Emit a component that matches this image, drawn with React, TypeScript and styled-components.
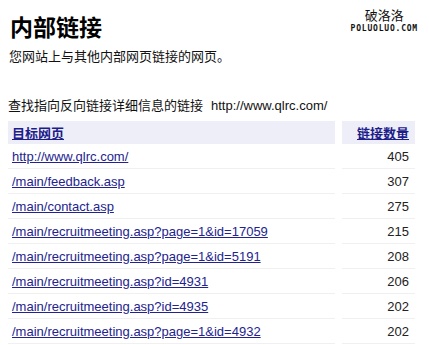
import styled, { createGlobalStyle } from "styled-components";

const GlobalStyle = createGlobalStyle`
  html, body {
    margin: 0;
    padding: 0;
    background: #fff;
  }
  body {
    font-family: "Liberation Sans", "Noto Sans CJK SC", sans-serif;
    color: #111;
  }
`;

const Page = styled.div`
  position: relative;
  width: 429px;
  height: 345px;
  overflow: hidden;
  padding: 0 8px;
  box-sizing: border-box;
`;

const Title = styled.h1`
  margin: 14px 0 0 2px;
  font-family: "Noto Sans CJK SC", sans-serif;
  font-size: 23px;
  line-height: 24px;
  font-weight: 700;
  color: #000;
`;

const Intro = styled.p`
  margin: 10px 0 0 1px;
  font-family: "Noto Sans CJK SC", sans-serif;
  font-size: 13px;
  line-height: 16px;
  color: #111;
`;

const SearchLine = styled.p`
  margin: 33px 0 0 0;
  font-size: 13px;
  line-height: 16px;
  font-family: "Noto Sans CJK SC", sans-serif;
  color: #111;

  span {
    margin-left: 8px;
    font-family: "Liberation Sans", sans-serif;
    font-size: 13px;
  }
`;

const Watermark = styled.div`
  position: absolute;
  top: 6px;
  right: 11px;
  display: flex;
  flex-direction: column;
  align-items: center;
  color: #111;
`;

const MarkCn = styled.div`
  font-family: "Noto Sans CJK SC", sans-serif;
  font-size: 13px;
  line-height: 18px;
`;

const MarkEn = styled.div`
  font-family: "DejaVu Sans Mono", monospace;
  font-weight: 700;
  font-size: 8px;
  line-height: 9px;
  letter-spacing: 0.8px;
`;

const Table = styled.div`
  margin-top: 7px;
  display: grid;
  grid-template-columns: 327px 73px;
  column-gap: 7px;
`;

const HeadCell = styled.div<{ $right?: boolean }>`
  height: 23px;
  background: #eeeef8;
  display: flex;
  align-items: center;
  justify-content: ${(p) => (p.$right ? "flex-end" : "flex-start")};
  padding: ${(p) => (p.$right ? "0 6px 0 0" : "0 0 0 4px")};

  a {
    font-family: "Noto Sans CJK SC", sans-serif;
    font-weight: 700;
    font-size: 13px;
    color: #1c1c8a;
    text-decoration: underline;
  }
`;

const Cell = styled.div<{ $right?: boolean }>`
  height: 25px;
  box-sizing: border-box;
  border-bottom: 1px solid #f0f0f0;
  display: flex;
  align-items: center;
  justify-content: ${(p) => (p.$right ? "flex-end" : "flex-start")};
  padding: ${(p) => (p.$right ? "1px 6px 0 0" : "1px 0 0 4px")};
  font-size: 13px;
  color: #222;
`;

const PageLink = styled.a`
  color: #23238f;
  text-decoration: underline;
  font-size: 13px;
`;

const rows = [
  { url: "http://www.qlrc.com/", count: 405 },
  { url: "/main/feedback.asp", count: 307 },
  { url: "/main/contact.asp", count: 275 },
  { url: "/main/recruitmeeting.asp?page=1&id=17059", count: 215 },
  { url: "/main/recruitmeeting.asp?page=1&id=5191", count: 208 },
  { url: "/main/recruitmeeting.asp?id=4931", count: 206 },
  { url: "/main/recruitmeeting.asp?id=4935", count: 202 },
  { url: "/main/recruitmeeting.asp?page=1&id=4932", count: 202 },
];

const App = () => {
  return (
    <Page>
      <GlobalStyle />
      <Watermark>
        <MarkCn>破洛洛</MarkCn>
        <MarkEn>POLUOLUO.COM</MarkEn>
      </Watermark>
      <Title>内部链接</Title>
      <Intro>您网站上与其他内部网页链接的网页。</Intro>
      <SearchLine>
        查找指向反向链接详细信息的链接<span>http://www.qlrc.com/</span>
      </SearchLine>
      <Table>
        <HeadCell>
          <a href="#">目标网页</a>
        </HeadCell>
        <HeadCell $right>
          <a href="#">链接数量</a>
        </HeadCell>
        {rows.map((r, i) => (
          <>
            <Cell key={"u" + i}>
              <PageLink href="#">{r.url}</PageLink>
            </Cell>
            <Cell key={"c" + i} $right>
              {r.count}
            </Cell>
          </>
        ))}
      </Table>
    </Page>
  );
};

export default App;
